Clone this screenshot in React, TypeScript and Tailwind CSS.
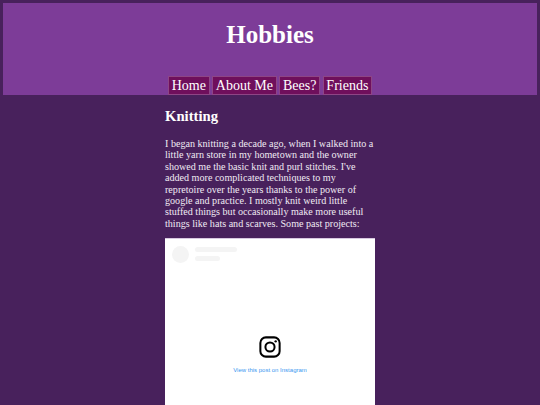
const navItems = ['Home', 'About Me', 'Bees?', 'Friends']

export default function App() {
  return (
    <div className="h-[405px] w-[540px] overflow-hidden bg-[#48215c] font-['Liberation_Serif',serif] text-white">
      {/* Header */}
      <header className="mx-[3px] flex h-[92px] translate-y-[3px] flex-col items-center justify-between bg-[#7d3c98] pt-[17px]">
        <h1 className="text-[25px] leading-[30px] font-bold">Hobbies</h1>
        <nav className="flex gap-[2.6px]">
          {navItems.map((item) => (
            <a
              key={item}
              className="h-[19px] border border-[#8e4585] bg-[#6f0f5c] px-[2.7px] text-[14px] leading-[17px]"
            >
              {item}
            </a>
          ))}
        </nav>
      </header>

      {/* Content */}
      <main className="mx-auto mt-[4px] w-[210px]">
        <h2 className="pt-[10px] text-[14.7px] leading-[20px] font-bold">Knitting</h2>
        <p className="mt-[12px] text-[10.1px] leading-[11.4px] text-[#f0eaf3]">
          I began knitting a decade ago, when I walked into a little yarn store in my hometown and
          the owner showed me the basic knit and purl stitches. I've added more complicated
          techniques to my repretoire over the years thanks to the power of google and practice. I
          mostly knit weird little stuffed things but occasionally make more useful things like
          hats and scarves. Some past projects:
        </p>

        {/* Instagram embed */}
        <div className="mt-[8.6px] h-[200px] border-t border-[#d8c8e0] bg-white p-[7px]">
          <div className="flex items-center gap-[6px]">
            <div className="h-[17px] w-[17px] rounded-full bg-[#f4f4f4]" />
            <div className="flex flex-col gap-[4px]">
              <div className="h-[5px] w-[42px] rounded-sm bg-[#f4f4f4]" />
              <div className="h-[5px] w-[25px] rounded-sm bg-[#f4f4f4]" />
            </div>
          </div>
          <div className="mt-[73px] flex flex-col items-center">
            <svg width="22" height="22" viewBox="0 0 24 24" fill="none" stroke="#000" strokeWidth="2.2">
              <rect x="1.5" y="1.5" width="21" height="21" rx="6" />
              <circle cx="12" cy="12" r="5" />
              <circle cx="18.2" cy="5.8" r="1.3" fill="#000" stroke="none" />
            </svg>
            <span className="mt-[8px] font-['Liberation_Sans',sans-serif] text-[6px] leading-[8px] text-[#3897f0]">
              View this post on Instagram
            </span>
          </div>
        </div>
      </main>
    </div>
  )
}
